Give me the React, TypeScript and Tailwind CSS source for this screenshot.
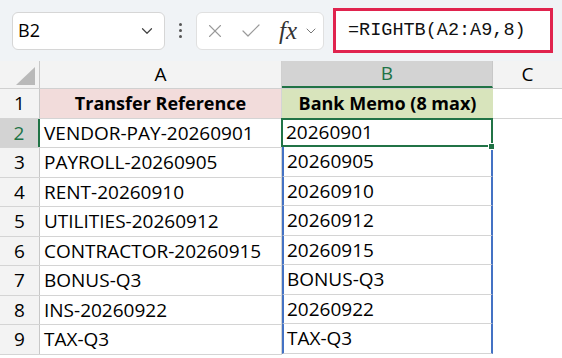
import { ChevronDown, X, Check } from "lucide-react"

const rows = [
  ["VENDOR-PAY-20260901", "20260901"],
  ["PAYROLL-20260905", "20260905"],
  ["RENT-20260910", "20260910"],
  ["UTILITIES-20260912", "20260912"],
  ["CONTRACTOR-20260915", "20260915"],
  ["BONUS-Q3", "BONUS-Q3"],
  ["INS-20260922", "20260922"],
  ["TAX-Q3", "TAX-Q3"],
]

const cellFont = { fontFamily: "'Open Sans', 'Liberation Sans', sans-serif" }

export default function App() {
  return (
    <div className="w-[562px] h-[358px] overflow-hidden bg-white text-black" style={cellFont}>
      {/* formula bar */}
      <div className="h-[61px] bg-[#f0f3f6] flex items-center pl-3 pr-[9px]">
        <div className="w-[153px] h-[38px] bg-white border border-[#d6d6d6] rounded-md flex items-center justify-between pl-[5px] pr-2">
          <span className="text-[18px]">B2</span>
          <ChevronDown size={18} strokeWidth={1.6} className="text-[#444]" />
        </div>
        <div className="w-[31px] flex flex-col items-center gap-[3px]">
          <span className="w-[3px] h-[3px] rounded-full bg-[#555]" />
          <span className="w-[3px] h-[3px] rounded-full bg-[#555]" />
          <span className="w-[3px] h-[3px] rounded-full bg-[#555]" />
        </div>
        <div className="w-[128px] h-[38px] bg-white border border-[#e0e0e0] rounded-md flex items-center pl-[7px] gap-[13px] text-[#9a9a9a]">
          <X size={22} strokeWidth={1.2} />
          <Check size={24} strokeWidth={1.2} />
          <div className="flex items-center gap-[6px] ml-[3px]">
            <span className="text-[25px] leading-none italic text-[#333]" style={{ fontFamily: "'Liberation Serif', serif" }}>fx</span>
            <ChevronDown size={16} strokeWidth={1.5} className="text-[#777]" />
          </div>
        </div>
        <div className="ml-[9px] flex-1 h-[45px] bg-white border-[3px] border-[#e0234e] flex items-center pl-[12px]">
          <span className="text-[18.5px] text-[#111]" style={{ fontFamily: "'Liberation Mono', monospace" }}>=RIGHTB(A2:A9,8)</span>
        </div>
      </div>

      {/* column headers */}
      <div className="flex h-[28px] bg-[#f3f3f3] border-b border-[#d0d0d0] text-[19px]">
        <div className="w-[40px] border-r border-[#c8c8c8] relative">
          <div className="absolute right-[4px] bottom-[3px] w-0 h-0 border-l-[19px] border-l-transparent border-b-[18px] border-b-[#b9b9b9]" />
        </div>
        <div className="w-[242px] flex items-center justify-center border-r border-[#d0d0d0]">A</div>
        <div className="w-[211px] flex items-center justify-center bg-[#d3d3d3] text-[#217346] border-b-2 border-[#217346] border-r border-r-[#c8c8c8]">B</div>
        <div className="flex-1 flex items-center justify-center">C</div>
      </div>

      {/* header row */}
      <div className="flex h-[29.5px] text-[19px] border-b border-[#d4d4d4]">
        <div className="w-[40px] bg-[#f3f3f3] border-r border-[#c8c8c8] flex items-center justify-center">1</div>
        <div className="w-[242px] bg-[#f2dcdb] border-r border-[#d4d4d4] flex items-center justify-center font-bold text-[18px]">Transfer Reference</div>
        <div className="w-[211px] bg-[#d8e4bc] flex items-center justify-center font-bold text-[18px]">Bank Memo (8 max)</div>
        <div className="flex-1" />
      </div>

      {/* data rows */}
      <div className="flex">
        <div className="flex flex-col">
          {rows.map((r, i) => (
            <div key={i} className="flex h-[29.5px] text-[19px] border-b border-[#d4d4d4]">
              <div
                className={
                  i === 0
                    ? "w-[40px] bg-[#d3d3d3] text-[#217346] border-r-2 border-[#217346] flex items-center justify-center"
                    : "w-[40px] bg-[#f3f3f3] border-r border-[#c8c8c8] flex items-center justify-center"
                }
              >
                {i + 2}
              </div>
              <div className="w-[242px] flex items-center pl-[4px] border-r border-[#d4d4d4]">{r[0]}</div>
            </div>
          ))}
        </div>
        <div className="w-[211px] flex flex-col relative">
          {rows.map((r, i) => (
            <div
              key={i}
              className={
                i === 0
                  ? "h-[29.5px] flex items-center pl-[3px] text-[19px] border-2 border-[#217346] -mt-px -ml-px"
                  : "h-[29.5px] flex items-center pl-[3px] text-[19px] border-b border-[#d4d4d4] border-x-2 border-x-[#4472c4]"
              }
            >
              {r[1]}
            </div>
          ))}
          <div className="absolute left-[206px] top-[24px] w-[7px] h-[7px] bg-[#217346] border border-white" />
        </div>
        <div className="flex-1" />
      </div>
    </div>
  )
}
